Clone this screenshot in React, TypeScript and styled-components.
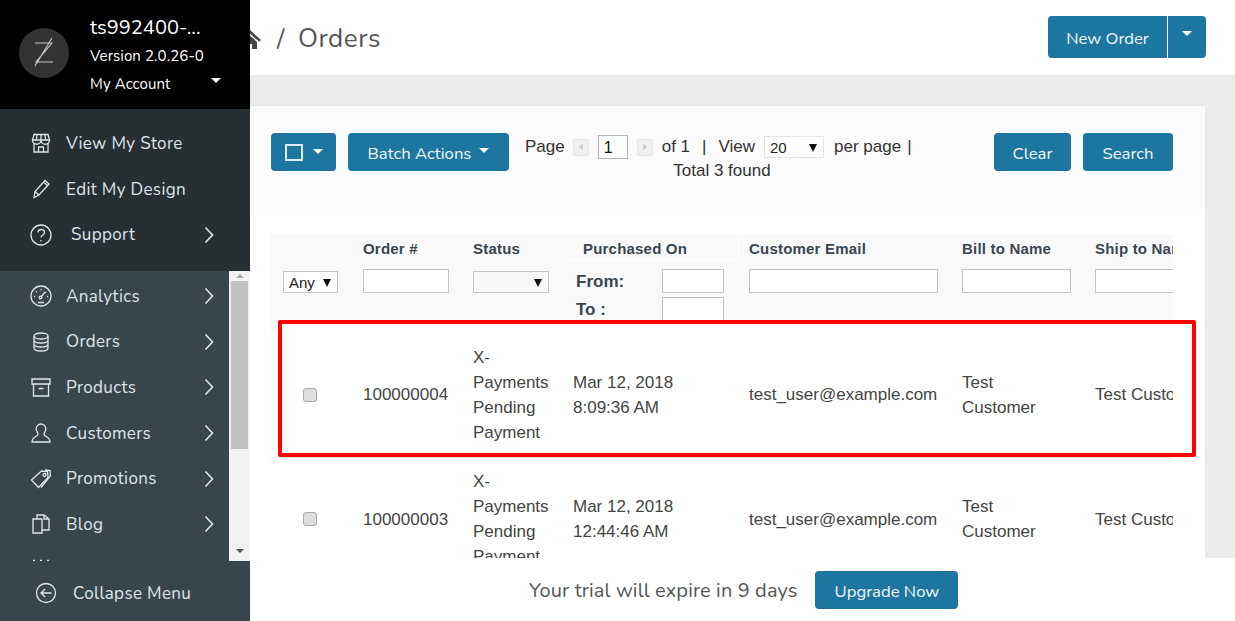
import React from 'react';
import styled, { createGlobalStyle } from 'styled-components';

const UI_FONT = `"Nunito", "Lato", "Noto Sans", sans-serif`;
const BLUE = '#1d76a0';

const GlobalStyle = createGlobalStyle`
    html, body {
        margin: 0;
        height: 621px;
        overflow: hidden;
        background: #ebebeb;
        font-family: "Liberation Sans", Arial, sans-serif;
    }
    * { box-sizing: border-box; }
`;

const Sidebar = styled.aside`
    position: fixed;
    left: 0;
    top: 0;
    bottom: 0;
    width: 250px;
    display: flex;
    flex-direction: column;
    background: #37464d;
    font-family: ${UI_FONT};
    z-index: 5;
`;

const Account = styled.div`
    height: 109px;
    background: #000;
    display: flex;
    align-items: flex-start;
    padding: 28px 0 0 19px;
    color: #fff;
`;

const Avatar = styled.div`
    width: 50px;
    height: 50px;
    border-radius: 50%;
    background: #333;
    flex: none;
`;

const AccountText = styled.div`
    margin: -13px 0 0 21px;
    width: 131px;
`;

const AccountName = styled.div`
    font-size: 20px;
    line-height: 26px;
    letter-spacing: 0.05px;
`;

const AccountLine = styled.div`
    display: flex;
    justify-content: space-between;
    align-items: center;
    font-size: 15px;
    line-height: 26px;
    margin-top: 2px;
    letter-spacing: 0.1px;
`;

const WhiteCaret = styled.span<{ $lift?: number }>`
    display: inline-block;
    width: 0;
    height: 0;
    margin-bottom: ${p => p.$lift ?? 0}px;
    border-left: 5px solid transparent;
    border-right: 5px solid transparent;
    border-top: 5px solid #fff;
`;

const QuickMenu = styled.nav`
    height: 162px;
    background: #272f33;
    padding-top: 11.5px;
    flex: none;
`;

const MenuItem = styled.div`
    height: 45.7px;
    display: flex;
    align-items: center;
    padding-left: 30px;
    color: #dfe6ea;
    font-size: 17px;
    letter-spacing: 0.35px;
    white-space: nowrap;
`;

const MenuIcon = styled.svg<{ $gap?: number }>`
    width: 24px;
    height: 24px;
    margin-right: ${p => p.$gap ?? 13}px;
    margin-left: -1px;
    flex: none;
    fill: none;
    stroke: #dfe6ea;
    stroke-width: 1.3;
`;

const Chevron = styled.svg<{ $right: number }>`
    width: 10px;
    height: 18px;
    margin-left: auto;
    margin-right: ${p => p.$right}px;
    fill: none;
    stroke: #dfe6ea;
    stroke-width: 1.6;
    flex: none;
`;

const ScrollZone = styled.div`
    height: 290px;
    display: flex;
    flex: none;
`;

const ScrollList = styled.div`
    flex: 1;
    min-width: 0;
    overflow: hidden;
    padding-top: 2.2px;
`;

const ScrollBar = styled.div`
    width: 21px;
    flex: none;
    background: #f1f1f1;
    display: flex;
    flex-direction: column;
    align-items: center;
`;

const ScrollThumb = styled.div`
    width: 17px;
    height: 168px;
    background: #c1c1c1;
`;

const ScrollArrow = styled.div<{ $down?: boolean }>`
    width: 0;
    height: 0;
    margin: ${p => (p.$down ? 'auto 0 8px' : '3px 0 3px')};
    border-left: 4px solid transparent;
    border-right: 4px solid transparent;
    ${p => (p.$down ? 'border-top: 4px solid #505050;' : 'border-bottom: 4px solid #a3a3a3;')}
`;

const Collapse = styled(MenuItem)`
    height: 60px;
    padding: 4px 0 0 35px;
    flex: none;
`;

const Main = styled.main`
    height: 621px;
    overflow: hidden;
`;

const Header = styled.header`
    height: 75px;
    background: #fff;
    display: flex;
    align-items: center;
    padding: 0 29px 0 239px;
`;

const Crumbs = styled.div`
    display: flex;
    align-items: center;
    flex: 1;
    padding-top: 2px;
    font-family: ${UI_FONT};
    color: #555;
    font-size: 26px;
    letter-spacing: 0.55px;
`;

const CrumbSep = styled.span`
    margin: 0 13px 0 16px;
`;

const Button = styled.button<{ $w: number; $h?: number }>`
    width: ${p => p.$w}px;
    height: ${p => p.$h ?? 38}px;
    background: ${BLUE};
    color: #f2f7fa;
    border: none;
    border-radius: 4px;
    padding: 2px 0 0;
    font-family: ${UI_FONT};
    font-size: 16.7px;
    display: inline-flex;
    align-items: center;
    justify-content: center;
    gap: 8px;
    flex: none;
`;

const SplitGroup = styled.div`
    display: flex;
    margin-top: -1px;
    gap: 1px;
`;

const SplitMain = styled(Button)`
    border-radius: 4px 0 0 4px;
`;

const SplitSide = styled(Button)`
    border-radius: 0 4px 4px 0;
    padding: 0 0 8px;
`;

const Content = styled.div`
    padding: 31px 30px 0 250px;
`;

const Card = styled.section`
    background: #fff;
    border-radius: 0 3px 0 0;
    box-shadow: 0 -1px 0 #e4e4e4;
`;

const Toolbar = styled.div`
    height: 103px;
    background: #fbfbfb;
    display: flex;
    align-items: flex-start;
    gap: 12px;
    padding: 27px 32px 0 21px;
`;

const BoxIcon = styled.span`
    width: 18px;
    height: 17px;
    border: 2px solid #dcebf3;
    margin: -2px 2px 0 0;
`;

const Pager = styled.div`
    margin: 2px 0 0 4px;
    width: 394px;
    flex: none;
    color: #333;
    font-size: 17px;
    text-align: center;
`;

const PagerRow = styled.div`
    display: flex;
    align-items: center;
    height: 24px;
    white-space: nowrap;
`;

const PagerGap = styled.span<{ $l?: number; $r?: number }>`
    margin-left: ${p => p.$l ?? 0}px;
    margin-right: ${p => p.$r ?? 0}px;
    display: inline-flex;
`;

const PageNudge = styled.span<{ $flip?: boolean }>`
    width: 16px;
    height: 17px;
    border: 1px solid #e6e6e6;
    background: #f0f0f0;
    border-radius: 2px;
    display: inline-flex;
    align-items: center;
    justify-content: center;
    &::before {
        content: '';
        border-top: 4px solid transparent;
        border-bottom: 4px solid transparent;
        ${p => (p.$flip ? 'border-left: 4px solid #cfcfcf;' : 'border-right: 4px solid #cfcfcf;')}
    }
`;

const PageInput = styled.input`
    width: 30px;
    height: 24px;
    border: 1px solid #b5b5b5;
    padding: 2px 0 0 5px;
    font: 16px "Liberation Sans", Arial, sans-serif;
    color: #111;
    margin: 0 9px 0 9px;
    background: #fff;
`;

const PagerTotal = styled.div`
    line-height: 24px;
`;

const FakeSelect = styled.div<{ $w: number; $pale?: boolean; $fill?: string }>`
    width: ${p => p.$w}px;
    height: 22px;
    border: 1px solid ${p => (p.$pale ? '#e3e3e3' : '#c4c4c4')};
    background: ${p => p.$fill ?? '#fff'};
    display: flex;
    align-items: center;
    padding: 1px 6px 0 5px;
    font-size: 15px;
    color: #222;
    flex: none;
    &::after {
        content: '';
        margin-left: auto;
        border-left: 4px solid transparent;
        border-right: 4px solid transparent;
        border-top: 8px solid #111;
    }
`;

const Actions = styled.div`
    margin-left: auto;
    display: flex;
    gap: 12px;
`;

const TableArea = styled.div`
    position: relative;
    margin: 25px 32px 0 21px;
`;

const TableClip = styled.div`
    overflow: hidden;
`;

const Table = styled.table`
    table-layout: fixed;
    width: 1040px;
    border-collapse: collapse;
    color: #444;
    font-size: 17px;
`;

const HeadRow = styled.tr`
    background: #f9f9f9;
    height: 27px;
`;

const FilterRow = styled.tr`
    background: #f9f9f9;
    height: 72px;
`;

const Th = styled.th<{ $inset?: boolean }>`
    padding: 1px 0 0 ${p => (p.$inset ? 20 : 10)}px;
    text-align: left;
    font-size: 15px;
    letter-spacing: 0.2px;
    color: #3b4650;
    white-space: nowrap;
`;

const PurchasedTh = styled(Th)`
    box-shadow: inset 0 -1px 0 #fff, inset -1px 0 0 #fff;
`;

const FilterCell = styled.td`
    padding: 0 0 0 10px;
    vertical-align: top;
    height: 72px;
`;

const FilterInner = styled.div<{ $top?: number }>`
    padding-top: ${p => p.$top ?? 8}px;
`;

const AnyCell = styled(FilterCell)`
    padding-left: 12px;
`;

const FilterInput = styled.input<{ $w: number }>`
    display: block;
    width: ${p => p.$w}px;
    height: 24px;
    border: 1px solid #c4c4c4;
    background: #fff;
    padding: 0;
`;

const DateGrid = styled.div`
    padding: 8px 0 0 3px;
    display: grid;
    grid-template-columns: 86px 62px;
    grid-auto-rows: 24px;
    row-gap: 4px;
    align-items: center;
    font-weight: bold;
    font-size: 17px;
    color: #3b4650;
`;

const DateLabel = styled.span`
    padding-top: 2px;
`;

const Row = styled.tr`
    border-bottom: 1px solid #e5e5e5;
    height: 124px;
`;

const Td = styled.td`
    padding: 0 0 0 10px;
    line-height: 25px;
    vertical-align: middle;
    overflow: hidden;
    white-space: nowrap;
`;

const Check = styled.input`
    appearance: none;
    display: block;
    width: 14px;
    height: 14px;
    margin: 0 0 0 22px;
    border: 1px solid #aaa;
    border-radius: 3px;
    background: #dedede;
`;

const Highlight = styled.div`
    position: absolute;
    left: 7px;
    top: 86px;
    width: 918px;
    height: 137px;
    border: 4px solid #fe0000;
    border-radius: 2px;
    pointer-events: none;
    &::before {
        content: '';
        display: block;
        height: 9px;
        background: #fff;
    }
`;

const TrialBar = styled.div`
    position: fixed;
    left: 250px;
    right: 0;
    bottom: 0;
    height: 63px;
    background: #fff;
    display: flex;
    align-items: flex-start;
    padding: 13px 0 0 279px;
    gap: 18px;
    font-family: ${UI_FONT};
    z-index: 4;
`;

const TrialText = styled.span`
    font-size: 20px;
    color: #555;
    line-height: 40px;
    letter-spacing: 0.13px;
`;

const Icons: Record<string, React.ReactNode> = {
    store: (
        <>
            <path d="M5 3.500h14l1.500 5.500h-17z" />
            <path d="M8 3.500 7.400 9M12 3.500V9M16 3.500 16.600 9" />
            <path d="M3.500 9a2.800 2.800 0 0 0 8.500 0 2.800 2.800 0 0 0 8.500 0" />
            <path d="M5 12v9h14v-9M9.500 21v-5h5v5" />
        </>
    ),
    pencil: <path d="M5 20.500l1-6L16 3.500l4 3.500-10 11zM6 14.500l4 3.500M14.500 5l4 3.500" />,
    help: (
        <>
            <circle cx="12" cy="12" r="10" />
            <path d="M9 9.500c0-4 6.500-4 6.500 0 0 2.500-3.500 2.500-3.500 5" />
            <path d="M12 17v1.500" />
        </>
    ),
    gauge: (
        <>
            <circle cx="12" cy="12" r="10" />
            <path d="M9 18.500h6M12 13l4-5M7 7.500l.8.8M12 5v1.200M17 8l-.8.8M5 12.500h1.200M18 12.500h1.200" />
            <circle cx="11.500" cy="13.500" r="1.300" />
        </>
    ),
    database: (
        <>
            <ellipse cx="12" cy="6" rx="7" ry="3" />
            <path d="M5 6v12c0 1.700 3 3 7 3s7-1.300 7-3V6M5 10c0 1.700 3 3 7 3s7-1.300 7-3M5 14c0 1.700 3 3 7 3s7-1.300 7-3" />
        </>
    ),
    archive: <path d="M3 4h18v5H3zM4.500 9v12h15V9M9.500 13.500h5" />,
    user: (
        <path d="M12 3a4.800 4.800 0 0 0-4.800 4.800c0 2.700 1.800 3.600 1.800 5.400 0 2.800-6 2-6 7.800h18c0-5.800-6-5-6-7.800 0-1.800 1.800-2.700 1.800-5.400A4.800 4.800 0 0 0 12 3z" />
    ),
    tags: (
        <>
            <path d="M2.500 13 12.500 4l6 .5.500 6-9.500 10z" />
            <circle cx="15.500" cy="8" r="1.500" />
            <path d="M16 3l5 .5.300 5.500-9.300 11.500" />
        </>
    ),
    blog: (
        <>
            <path d="M4 7h9v14H4z" />
            <path d="M8 7V3h7l5 4v11h-7M15 3v4h5" />
        </>
    ),
    dots: <path d="M4 2.500h2M11 2.500h2M18 2.500h2" />,
    back: (
        <>
            <circle cx="12" cy="12" r="9.500" />
            <path d="M17.500 12H7M11 8l-4 4 4 4" />
        </>
    ),
};

const SideIcon = ({ name, gap }: { name: string; gap?: number }) => (
    <MenuIcon viewBox="0 0 24 24" $gap={gap}>{Icons[name]}</MenuIcon>
);

const Arrow = ({ right }: { right: number }) => (
    <Chevron viewBox="0 0 10 18" $right={right}><path d="M1.500 1.500 8.500 9l-7 7.500" /></Chevron>
);

const Logo = () => (
    <svg width="50" height="50" viewBox="0 0 50 50" fill="none" stroke="#c9c9c9" strokeWidth="1.100">
        <path d="M16 15h17L17 34h17M33 10 16 38" />
    </svg>
);

const orders = [
    { id: '100000004', date: 'Mar 12, 2018', time: '8:09:36 AM' },
    { id: '100000003', date: 'Mar 12, 2018', time: '12:44:46 AM' },
    { id: '100000002', date: 'Mar 12, 2018', time: '12:20:10 AM' },
];

const quick = [
    { label: 'View My Store', icon: 'store' },
    { label: 'Edit My Design', icon: 'pencil' },
    { label: 'Support', icon: 'help', gap: 18, arrow: true },
];

const scrolled = [
    { label: 'Analytics', icon: 'gauge' },
    { label: 'Orders', icon: 'database' },
    { label: 'Products', icon: 'archive' },
    { label: 'Customers', icon: 'user' },
    { label: 'Promotions', icon: 'tags' },
    { label: 'Blog', icon: 'blog' },
];

export default function App() {
    return (
        <>
            <GlobalStyle />
            <Sidebar>
                <Account>
                    <Avatar><Logo /></Avatar>
                    <AccountText>
                        <AccountName>ts992400-...</AccountName>
                        <AccountLine>Version 2.0.26-0</AccountLine>
                        <AccountLine>My Account <WhiteCaret $lift={8} /></AccountLine>
                    </AccountText>
                </Account>
                <QuickMenu>
                    {quick.map(item => (
                        <MenuItem key={item.label}>
                            <SideIcon name={item.icon} gap={item.gap} />
                            {item.label}
                            {item.arrow && <Arrow right={36} />}
                        </MenuItem>
                    ))}
                </QuickMenu>
                <ScrollZone>
                    <ScrollList>
                        {scrolled.map(item => (
                            <MenuItem key={item.label}>
                                <SideIcon name={item.icon} />
                                {item.label}
                                <Arrow right={15} />
                            </MenuItem>
                        ))}
                        <MenuItem><SideIcon name="dots" /></MenuItem>
                    </ScrollList>
                    <ScrollBar>
                        <ScrollArrow />
                        <ScrollThumb />
                        <ScrollArrow $down />
                    </ScrollBar>
                </ScrollZone>
                <Collapse>
                    <SideIcon name="back" gap={15} />
                    Collapse Menu
                </Collapse>
            </Sidebar>

            <Main>
                <Header>
                    <Crumbs>
                        <svg width="22" height="20" viewBox="0 0 22 20" fill="#444">
                            <path d="M11 1 0 11l1.800 1.800L11 4.500l9.200 8.300L22 11zM4 13v7h5v-5h4v5h5v-7l-7-6.500z" />
                        </svg>
                        <CrumbSep>/</CrumbSep>
                        Orders
                    </Crumbs>
                    <SplitGroup>
                        <SplitMain $w={119} $h={42}>New Order</SplitMain>
                        <SplitSide $w={38} $h={42}><WhiteCaret /></SplitSide>
                    </SplitGroup>
                </Header>
                <Content>
                    <Card>
                        <Toolbar>
                            <Button $w={65}><BoxIcon /><WhiteCaret $lift={4} /></Button>
                            <Button $w={161}>Batch Actions <WhiteCaret $lift={5} /></Button>
                            <Pager>
                                <PagerRow>
                                    Page
                                    <PagerGap $l={8}><PageNudge /></PagerGap>
                                    <PageInput defaultValue="1" readOnly />
                                    <PageNudge $flip />
                                    <PagerGap $l={9}>of 1</PagerGap>
                                    <PagerGap $l={12}>|</PagerGap>
                                    <PagerGap $l={12} $r={9}>View</PagerGap>
                                    <FakeSelect $w={60} $pale>20</FakeSelect>
                                    <PagerGap $l={10}>per page</PagerGap>
                                    <PagerGap $l={6}>|</PagerGap>
                                </PagerRow>
                                <PagerTotal>Total 3 found</PagerTotal>
                            </Pager>
                            <Actions>
                                <Button $w={77}>Clear</Button>
                                <Button $w={90}>Search</Button>
                            </Actions>
                        </Toolbar>
                        <TableArea>
                            <TableClip>
                                <Table>
                                    <colgroup>
                                        <col width={82} />
                                        <col width={110} />
                                        <col width={100} />
                                        <col width={176} />
                                        <col width={213} />
                                        <col width={133} />
                                        <col width={226} />
                                    </colgroup>
                                    <thead>
                                        <HeadRow>
                                            <Th />
                                            <Th>Order #</Th>
                                            <Th>Status</Th>
                                            <PurchasedTh $inset>Purchased On</PurchasedTh>
                                            <Th>Customer Email</Th>
                                            <Th>Bill to Name</Th>
                                            <Th>Ship to Name</Th>
                                        </HeadRow>
                                        <FilterRow>
                                            <AnyCell>
                                                <FilterInner $top={10}>
                                                    <FakeSelect $w={55}>Any</FakeSelect>
                                                </FilterInner>
                                            </AnyCell>
                                            <FilterCell><FilterInner><FilterInput $w={86} /></FilterInner></FilterCell>
                                            <FilterCell>
                                                <FilterInner $top={10}><FakeSelect $w={76} $fill="#f7f7f7" /></FilterInner>
                                            </FilterCell>
                                            <FilterCell>
                                                <DateGrid>
                                                    <DateLabel>From:</DateLabel><FilterInput $w={62} />
                                                    <DateLabel>To :</DateLabel><FilterInput $w={62} />
                                                </DateGrid>
                                            </FilterCell>
                                            <FilterCell><FilterInner><FilterInput $w={189} /></FilterInner></FilterCell>
                                            <FilterCell><FilterInner><FilterInput $w={109} /></FilterInner></FilterCell>
                                            <FilterCell><FilterInner><FilterInput $w={109} /></FilterInner></FilterCell>
                                        </FilterRow>
                                    </thead>
                                    <tbody>
                                        {orders.map(order => (
                                            <Row key={order.id}>
                                                <Td><Check type="checkbox" /></Td>
                                                <Td>{order.id}</Td>
                                                <Td>X-<br />Payments<br />Pending<br />Payment</Td>
                                                <Td>{order.date}<br />{order.time}</Td>
                                                <Td>test_user@example.com</Td>
                                                <Td>Test<br />Customer</Td>
                                                <Td>Test Customer</Td>
                                            </Row>
                                        ))}
                                    </tbody>
                                </Table>
                            </TableClip>
                            <Highlight />
                        </TableArea>
                    </Card>
                </Content>
            </Main>

            <TrialBar>
                <TrialText>Your trial will expire in 9 days</TrialText>
                <Button $w={143}>Upgrade Now</Button>
            </TrialBar>
        </>
    );
}
